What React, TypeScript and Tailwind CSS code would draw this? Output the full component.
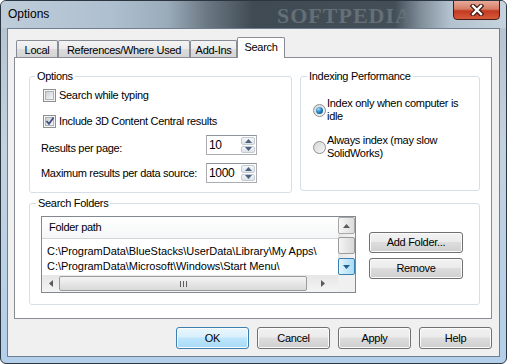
import type { ReactNode } from 'react';

const ui = "font-['Liberation_Sans',Arial,sans-serif] text-[11px] leading-[13px] tracking-[-0.3px] text-black";

function Checkbox({ checked }: { checked?: boolean }) {
  return (
    <span className="flex h-[13px] w-[13px] shrink-0 items-center justify-center border border-[#8e8f8f] bg-[#f4f4f4]">
      <span className="relative flex h-[9px] w-[9px] items-center justify-center border border-[#aeb3b9] bg-[linear-gradient(135deg,#cbcfd5,#f6f6f6)]">
        {checked && (
          <svg className="absolute -left-px -top-[2px]" width="10" height="10" viewBox="0 0 10 10">
            <path d="M1.5 5 L4 7.8 L8.6 1.6" fill="none" stroke="#3b4f86" strokeWidth="1.7" />
          </svg>
        )}
      </span>
    </span>
  );
}

function Radio({ selected }: { selected?: boolean }) {
  return (
    <span className="flex h-[13px] w-[13px] shrink-0 items-center justify-center rounded-full border border-[#8e8f8f] bg-[linear-gradient(135deg,#d4d6d9,#f7f7f7)]">
      {selected && (
        <span className="h-[7px] w-[7px] rounded-full bg-[radial-gradient(circle_at_35%_30%,#9fe0fb,#2a86c4_45%,#0b3f6e)]" />
      )}
    </span>
  );
}

function Arrow({ dir, color = '#4d6185' }: { dir: 'up' | 'down' | 'left' | 'right'; color?: string }) {
  const pts = {
    up: '0,4 3.5,0 7,4',
    down: '0,0 7,0 3.5,4',
    left: '4,0 4,7 0,3.5',
    right: '0,0 0,7 4,3.5',
  }[dir];
  const vertical = dir === 'up' || dir === 'down';
  return (
    <svg width={vertical ? 7 : 4} height={vertical ? 4 : 7} viewBox={vertical ? '0 0 7 4' : '0 0 4 7'}>
      <polygon points={pts} fill={color} />
    </svg>
  );
}

function Spinner({ value }: { value: string }) {
  return (
    <div className="flex h-[20px] w-[51px] border border-[#abadb3] border-t-[#8f949c] bg-white">
      <span className="flex-1 pl-[2px] pt-[2px] text-[12px] leading-[15px]">{value}</span>
      <div className="flex w-[16px] flex-col gap-px p-px">
        <span className="flex flex-1 items-center justify-center rounded-[2px] border border-[#c5cbd2] bg-[linear-gradient(to_bottom,#f5f6f7,#dfe3e8)]">
          <Arrow dir="up" />
        </span>
        <span className="flex flex-1 items-center justify-center rounded-[2px] border border-[#c5cbd2] bg-[linear-gradient(to_bottom,#f5f6f7,#dfe3e8)]">
          <Arrow dir="down" />
        </span>
      </div>
    </div>
  );
}

function Button({ children, primary, className = '' }: { children: ReactNode; primary?: boolean; className?: string }) {
  return (
    <div
      className={`flex items-center justify-center rounded-[3px] border shadow-[inset_0_0_0_1px_#fbfbfb] ${
        primary
          ? 'border-[#3c7fb1] bg-[linear-gradient(to_bottom,#eaf6fd,#d9f0fc_45%,#bee6fd_50%,#a7d9f5)]'
          : 'border-[#707070] bg-[linear-gradient(to_bottom,#f2f2f2,#ebebeb_45%,#dddddd_50%,#cfcfcf)]'
      } ${className}`}
    >
      {children}
    </div>
  );
}

function Tab({ label, width, selected }: { label: string; width: string; selected?: boolean }) {
  if (selected) {
    return (
      <div className={`relative z-10 -mb-px flex h-[21px] items-center justify-center rounded-t-[2px] border border-b-0 border-[#898c95] bg-white pb-[2px] ${width}`}>
        {label}
      </div>
    );
  }
  return (
    <div className={`flex h-[17px] items-center justify-center rounded-t-[2px] border border-b-0 border-[#898c95] bg-[linear-gradient(to_bottom,#f3f3f3,#ebebeb_50%,#dddddd_50%,#d4d4d4)] pt-[2px] ${width}`}>
      {label}
    </div>
  );
}

function VScrollBar() {
  return (
    <div className="flex w-[17px] flex-col bg-[linear-gradient(to_right,#e6e6e6,#f4f4f4)]">
      <span className="flex h-[17px] items-center justify-center rounded-[2px] border border-[#a7a7a7] bg-[linear-gradient(to_right,#f6f6f6,#dcdcdc)]">
        <Arrow dir="up" color="#5a5a5a" />
      </span>
      <span className="mt-[3px] h-[17px] rounded-[2px] border border-[#9b9b9b] bg-[linear-gradient(to_right,#f4f4f4,#d9d9d9)]" />
      <span className="flex-1" />
      <span className="flex h-[17px] items-center justify-center rounded-[2px] border border-[#3c7fb1] bg-[linear-gradient(to_right,#e3f4fc,#a9dbf6)]">
        <Arrow dir="down" color="#1f5e8f" />
      </span>
    </div>
  );
}

function HScrollBar() {
  return (
    <div className="flex h-[17px] flex-1 items-center bg-[linear-gradient(to_bottom,#e6e6e6,#f4f4f4)]">
      <span className="flex w-[17px] justify-center">
        <Arrow dir="left" color="#5a5a5a" />
      </span>
      <span className="flex h-[15px] w-[248px] items-center justify-center rounded-[2px] border border-[#9b9b9b] bg-[linear-gradient(to_bottom,#f4f4f4,#d9d9d9)]">
        <span className="flex gap-[2px]">
          <span className="h-[6px] w-px bg-[#5c5c5c]" />
          <span className="h-[6px] w-px bg-[#5c5c5c]" />
          <span className="h-[6px] w-px bg-[#5c5c5c]" />
        </span>
      </span>
      <span className="flex flex-1 justify-center">
        <Arrow dir="right" color="#5a5a5a" />
      </span>
    </div>
  );
}

function FolderList() {
  return (
    <div className="flex h-[77px] w-[315px] flex-col border border-[#828790] bg-white">
      <div className="flex flex-1">
        <div className="flex flex-1 flex-col overflow-hidden">
          <div className="flex h-[22px] items-center border-b border-[#d5d5d5] bg-[linear-gradient(to_bottom,#ffffff,#f5f6f7)] pl-[7px]">
            Folder path
          </div>
          <div className="flex flex-col whitespace-nowrap pl-[5px] pt-[5px] tracking-[-0.05px]">
            <span className="h-[15px] leading-[15px]">C:\ProgramData\BlueStacks\UserData\Library\My Apps\</span>
            <span className="h-[15px] leading-[15px]">C:\ProgramData\Microsoft\Windows\Start Menu\</span>
          </div>
        </div>
        <VScrollBar />
      </div>
      <div className="flex">
        <HScrollBar />
        <span className="h-[17px] w-[17px] bg-[#f0f0f0]" />
      </div>
    </div>
  );
}

export default function App() {
  return (
    <div className={`relative flex h-[364px] w-[507px] flex-col overflow-hidden rounded-[6px] border border-[#2c3640] bg-[linear-gradient(to_bottom,#b3c1ce,#c3d2e0_40%,#b3cfea)] ${ui}`}>
      {/* title bar */}
      <div className="relative flex h-[27px] shrink-0 items-center bg-[linear-gradient(to_right,#bfcdda,#aebfcf_22%,#9aabba_33%,#6a7782_41%,#404a53_50%,#444e57_78%,#7f8d99_83%,#b3c2cf_89%,#c6d3de)] pl-[7px]">
        <span className="absolute left-[276px] top-[4px] font-['Liberation_Serif',serif] text-[22px] font-bold leading-[22px] tracking-[1px] text-[#646f78]">
          SOFTPEDIA
        </span>
        <span className="relative text-[12px] tracking-normal">Options</span>
      </div>
      <div className="absolute right-[6px] top-[-1px] flex h-[20px] w-[47px] items-center justify-center rounded-b-[4px] border border-[#4b1c15] bg-[linear-gradient(to_bottom,#e9aa9a,#d67d66_45%,#c23a20_55%,#d65a3c)]">
        <svg width="14" height="12" viewBox="0 0 14 12">
          <path d="M3 2 L11 10 M11 2 L3 10" stroke="#3d1710" strokeWidth="4.6" strokeLinecap="square" />
          <path d="M3 2 L11 10 M11 2 L3 10" stroke="#ffffff" strokeWidth="2.4" strokeLinecap="square" />
        </svg>
      </div>

      {/* client area */}
      <div className="mx-[6px] mb-[6px] flex flex-1 flex-col border border-[#6f7f90] bg-[#f0f0f0] pl-[6px] pr-[7px] pt-[8px]">
        <div className="flex h-[20px] items-end pl-[2px]">
          <Tab label="Local" width="w-[42px]" />
          <Tab label="References/Where Used" width="w-[132px]" />
          <Tab label="Add-Ins" width="w-[47px]" />
          <Tab label="Search" width="w-[48px]" selected />
        </div>

        <div className="h-[262px] w-[478px] border border-[#898c95] bg-white pl-[14px] pt-[12px]">
          <div className="flex items-start gap-[8px]">
            <fieldset className="h-[123px] w-[263px] rounded-[3px] border border-[#d5dfe5]">
              <legend className="ml-[5px] px-[2px] leading-[13px]">Options</legend>
              <div className="flex flex-col pl-[13px] pt-[6px]">
                <label className="flex h-[13px] items-center gap-[3px]">
                  <Checkbox />
                  Search while typing
                </label>
                <label className="mt-[13px] flex h-[13px] items-center gap-[3px]">
                  <Checkbox checked />
                  Include 3D Content Central results
                </label>
              </div>
              <div className="mt-[7px] flex h-[20px] items-end pl-[11px]">
                <span className="w-[165px]">Results per page:</span>
                <Spinner value="10" />
              </div>
              <div className="mt-[8px] flex h-[20px] items-center pl-[11px]">
                <span className="w-[165px]">Maximum results per data source:</span>
                <Spinner value="1000" />
              </div>
            </fieldset>

            <fieldset className="h-[121px] w-[180px] rounded-[3px] border border-[#d5dfe5]">
              <legend className="ml-[6px] px-[2px] leading-[13px]">Indexing Performance</legend>
              <div className="flex flex-col gap-[11px] pl-[12px] pt-[14px]">
                <label className="flex items-center gap-[1px]">
                  <Radio selected />
                  <span>
                    Index only when computer is
                    <br />
                    idle
                  </span>
                </label>
                <label className="flex items-center gap-[1px]">
                  <Radio />
                  <span>
                    Always index (may slow
                    <br />
                    SolidWorks)
                  </span>
                </label>
              </div>
            </fieldset>
          </div>

          <fieldset className="mt-[4px] h-[108px] w-[451px] rounded-[3px] border border-[#d5dfe5]">
            <legend className="ml-[6px] px-[2px] leading-[13px]">Search Folders</legend>
            <div className="flex pl-[11px] pt-[6px]">
              <FolderList />
              <div className="ml-[13px] flex flex-col gap-[5px] pt-[16px]">
                <Button className="h-[21px] w-[94px]">Add Folder...</Button>
                <Button className="h-[21px] w-[94px]">Remove</Button>
              </div>
            </div>
          </fieldset>
        </div>

        <div className="mt-[8px] flex justify-end gap-[8px]">
          <Button primary className="h-[22px] w-[73px]">OK</Button>
          <Button className="h-[22px] w-[73px]">Cancel</Button>
          <Button className="h-[22px] w-[73px]">Apply</Button>
          <Button className="h-[22px] w-[73px]">Help</Button>
        </div>
      </div>
    </div>
  );
}
